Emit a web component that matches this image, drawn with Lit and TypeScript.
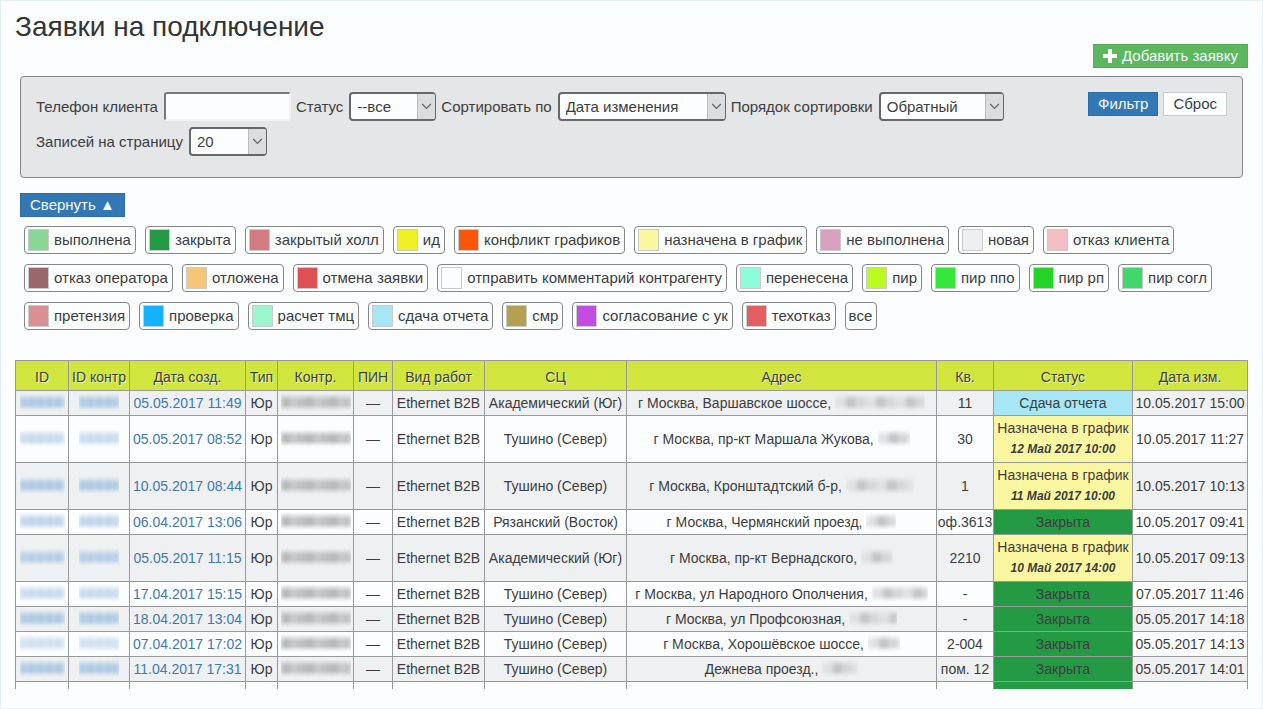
import { LitElement, html, css, nothing } from "lit";
import { customElement, property } from "lit/decorators.js";
import { styleMap } from "lit/directives/style-map.js";

interface Tag { name: string; color?: string }
interface Order {
  idTone: number;
  created: string;
  center: string;
  address: string;
  hidden: number;
  flat: string;
  status: "sent" | "planned" | "closed";
  visit?: string;
  changed: string;
}

const TAGS: Tag[] = [
  { name: "выполнена", color: "#88d795" },
  { name: "закрыта", color: "#259a45" },
  { name: "закрытый холл", color: "#d27c7f" },
  { name: "ид", color: "#f1f026" },
  { name: "конфликт графиков", color: "#fd560a" },
  { name: "назначена в график", color: "#fbf7a0" },
  { name: "не выполнена", color: "#d9a0bf" },
  { name: "новая", color: "#eeeff1" },
  { name: "отказ клиента", color: "#f3bfc3" },
  { name: "отказ оператора", color: "#9b676a" },
  { name: "отложена", color: "#f6c677" },
  { name: "отмена заявки", color: "#df5054" },
  { name: "отправить комментарий контрагенту", color: "#fcfdff" },
  { name: "перенесена", color: "#8dfcd8" },
  { name: "пир", color: "#bcfb20" },
  { name: "пир ппо", color: "#35e73b" },
  { name: "пир рп", color: "#24d528" },
  { name: "пир согл", color: "#42d66c" },
  { name: "претензия", color: "#d98f93" },
  { name: "проверка", color: "#16b1fd" },
  { name: "расчет тмц", color: "#9cf8cc" },
  { name: "сдача отчета", color: "#a6e6f5" },
  { name: "смр", color: "#b59f51" },
  { name: "согласование с ук", color: "#c54ce0" },
  { name: "техотказ", color: "#e45f62" },
  { name: "все" },
];

const ORDERS: Order[] = [
  { idTone: 0.9, created: "05.05.2017 11:49", center: "Академический (Юг)", address: "г Москва, Варшавское шоссе,", hidden: 90, flat: "11", status: "sent", changed: "10.05.2017 15:00" },
  { idTone: 0.6, created: "05.05.2017 08:52", center: "Тушино (Север)", address: "г Москва, пр-кт Маршала Жукова,", hidden: 32, flat: "30", status: "planned", visit: "12 Май 2017 10:00", changed: "10.05.2017 11:27" },
  { idTone: 0.9, created: "10.05.2017 08:44", center: "Тушино (Север)", address: "г Москва, Кронштадтский б-р,", hidden: 68, flat: "1", status: "planned", visit: "11 Май 2017 10:00", changed: "10.05.2017 10:13" },
  { idTone: 0.7, created: "06.04.2017 13:06", center: "Рязанский (Восток)", address: "г Москва, Чермянский проезд,", hidden: 30, flat: "оф.3613", status: "closed", changed: "10.05.2017 09:41" },
  { idTone: 0.8, created: "05.05.2017 11:15", center: "Академический (Юг)", address: "г Москва, пр-кт Вернадского,", hidden: 32, flat: "2210", status: "planned", visit: "10 Май 2017 14:00", changed: "10.05.2017 09:13" },
  { idTone: 0.6, created: "17.04.2017 15:15", center: "Тушино (Север)", address: "г Москва, ул Народного Ополчения,", hidden: 56, flat: "-", status: "closed", changed: "07.05.2017 11:46" },
  { idTone: 0.9, created: "18.04.2017 13:04", center: "Тушино (Север)", address: "г Москва, ул Профсоюзная,", hidden: 48, flat: "-", status: "closed", changed: "05.05.2017 14:18" },
  { idTone: 0.5, created: "07.04.2017 17:02", center: "Тушино (Север)", address: "г Москва, Хорошёвское шоссе,", hidden: 32, flat: "2-004", status: "closed", changed: "05.05.2017 14:13" },
  { idTone: 0.9, created: "11.04.2017 17:31", center: "Тушино (Север)", address: "Дежнева проезд.,", hidden: 36, flat: "пом. 12", status: "closed", changed: "05.05.2017 14:01" },
];

const STATUS_TEXT = { sent: "Сдача отчета", planned: "Назначена в график", closed: "Закрыта" };

const COLUMNS: [string, string][] = [
  ["ID", "c-id"], ["ID контр", "c-ext"], ["Дата созд.", "c-created"], ["Тип", "c-type"],
  ["Контр.", "c-contr"], ["ПИН", "c-pin"], ["Вид работ", "c-work"], ["СЦ", "c-center"],
  ["Адрес", "c-address"], ["Кв.", "c-flat"], ["Статус", "c-status"], ["Дата изм.", "c-changed"],
];

@customElement("select-field")
export class SelectField extends LitElement {
  @property() label = "";
  @property() value = "";
  @property() size = "m";

  static styles = css`
    :host { display: block; }
    .field { display: flex; align-items: center; gap: 6px; }
    label { white-space: nowrap; }
    .box { display: grid; grid-template-columns: 1fr 18px; height: 29px; box-sizing: border-box; border: 2px solid #66676a; border-right-width: 1px; border-radius: 4px; background: #fcfdff; overflow: hidden; }
    .s { width: 78px; }
    .m { width: 87px; }
    .l { width: 125px; }
    .xl { width: 168px; }
    select { grid-area: 1 / 1 / 2 / 3; appearance: none; border: 0; margin: 0; padding: 0 20px 0 6px; background: transparent; color: #3c3d40; font: inherit; outline-offset: -2px; }
    .arrow { grid-area: 1 / 2 / 2 / 3; display: grid; place-items: center; border-left: 1px solid #bbbcbe; background: #dcdddf; pointer-events: none; }
    svg { display: block; }
  `;

  render() {
    return html`
      <div class="field">
        <label for="control">${this.label}</label>
        <div class="box ${this.size}">
          <span class="arrow"><svg width="11" height="7" viewBox="0 0 11 7" fill="none" stroke="#606164" stroke-width="1.2"><path d="M1.2 1 5.5 5.3 9.8 1" /></svg></span>
          <select id="control"><option>${this.value}</option></select>
        </div>
      </div>`;
  }
}

@customElement("app-root")
export class AppRoot extends LitElement {
  static styles = css`
    :host { display: block; color: #3c3d40; font: 15px/20px "Liberation Sans", Arial, sans-serif; }
    .page { box-sizing: border-box; min-height: 100vh; padding: 8px 14px 0; border: 1px solid #e4effc; background: #fcfdff; }
    h1 { margin: 0; color: #333436; font-size: 28px; line-height: 35px; font-weight: 400; }
    .top { display: flex; justify-content: flex-end; }
    button { font: inherit; }
    .btn { box-sizing: border-box; height: 24px; padding: 0 9px; border: 1px solid #2e6da4; background: #3378b5; color: #f4f9fe; line-height: 20px; white-space: nowrap; }
    .add { display: flex; align-items: center; gap: 5px; border-color: #54ad57; background: #5cb75f; }
    .plain { border-color: #ccc; background: #fcfdff; color: #3c3d40; }
    .filters { display: flex; align-items: flex-start; justify-content: space-between; gap: 16px; margin: 8px 5px 0; padding: 15px 15px 21px; border: 1px solid #858688; border-radius: 4px; background: #e5e6e8; }
    .fields { display: flex; flex-wrap: wrap; gap: 6px 5px; }
    .field { display: flex; align-items: center; gap: 6px; white-space: nowrap; }
    .phone { box-sizing: border-box; width: 127px; height: 29px; padding: 0 6px; border: 2px solid; border-color: #77787a #f1f2f4 #f1f2f4 #77787a; border-radius: 3px; background: #fcfdff; color: inherit; font: inherit; }
    .actions { display: flex; gap: 5px; }
    .toggle { margin: 15px 5px 0; }
    .tags { display: flex; flex-wrap: wrap; align-items: flex-start; gap: 10px 9px; margin: 9px 9px 0; }
    .tag { display: flex; align-items: center; gap: 5px; box-sizing: border-box; height: 28px; padding: 0 4px 0 3px; border: 1px solid #858688; border-radius: 4px; background: #fcfdff; color: inherit; white-space: nowrap; }
    .swatch { box-sizing: border-box; width: 21px; height: 22px; border: 1px solid #c9cbcd; }
    .scroll { margin-top: 30px; overflow: hidden; }
    table { width: 100%; border-collapse: collapse; table-layout: fixed; font-size: 14px; }
    th, td { box-sizing: border-box; padding: 2px 0; border: 1px solid #98999b; text-align: center; font-weight: 400; white-space: nowrap; }
    th { height: 30px; padding: 4px 0 2px; background: #d1e53f; text-shadow: 1px 1px 0 #eef5b5; }
    tbody tr:nth-child(odd) { background: #eff0f2; }
    .tail td { height: 7px; padding: 0; border-bottom: 0; }
    tbody .tail { background: #fcfdff; }
    .c-id { width: 53px; } .c-ext { width: 61px; } .c-created { width: 116px; } .c-type { width: 32px; }
    .c-contr { width: 76px; } .c-pin { width: 39px; } .c-work { width: 92px; } .c-center { width: 142px; }
    .c-flat { width: 57px; } .c-status { width: 139px; } .c-changed { width: 115px; }
    a { color: #3e79b2; text-decoration: none; }
    .sent { background: #a6e6f5; }
    .planned { background: #fbf7a0; line-height: 21px; }
    .closed { background: #259a45; }
    .visit { display: block; font-size: 12px; font-weight: 700; font-style: italic; }
    .mask { display: inline-block; height: 18px; vertical-align: top; filter: blur(2px); mask-image: linear-gradient(transparent, #000 40%, #000 65%, transparent); }
    .blue { background: repeating-linear-gradient(90deg, #a3c3e0 0 5px, #b9d1e8 5px 9px); }
    .gray { width: 70px; background: repeating-linear-gradient(90deg, #b8b9bb 0 9px, #c8c9cb 9px 16px, #c0c1c3 16px 24px); }
    .pale { background: repeating-linear-gradient(90deg, #e0e1e3 0 11px, #c4c5c7 11px 20px, #d6d7d9 20px 30px); }
    .w-id { width: 45px; }
    .w-ext { width: 40px; }
  `;

  private row(o: Order) {
    const tone = styleMap({ opacity: String(o.idTone) });
    return html`
      <tr>
        <td><a href="#" aria-label="Заявка"><span class="mask blue w-id" style=${tone}></span></a></td>
        <td><a href="#" aria-label="Заявка контрагента"><span class="mask blue w-ext" style=${tone}></span></a></td>
        <td><a href="#">${o.created}</a></td>
        <td>Юр</td>
        <td><span class="mask gray"></span></td>
        <td>—</td>
        <td>Ethernet B2B</td>
        <td>${o.center}</td>
        <td>${o.address} <span class="mask pale" style=${styleMap({ width: `${o.hidden}px` })}></span></td>
        <td>${o.flat}</td>
        <td class=${o.status}>${STATUS_TEXT[o.status]}${o.visit ? html`<span class="visit">${o.visit}</span>` : nothing}</td>
        <td>${o.changed}</td>
      </tr>`;
  }

  render() {
    return html`
      <main class="page">
        <h1>Заявки на подключение</h1>
        <div class="top">
          <button class="btn add" type="button">
            <svg width="14" height="14" viewBox="0 0 14 14" fill="#fff"><path d="M5 0h4v5h5v4H9v5H5V9H0V5h5z" /></svg>
            Добавить заявку
          </button>
        </div>
        <form class="filters" @submit=${(e: Event) => e.preventDefault()}>
          <div class="fields">
            <div class="field"><label for="phone">Телефон клиента</label><input class="phone" id="phone" type="text" /></div>
            <select-field label="Статус" value="--все" size="m"></select-field>
            <select-field label="Сортировать по" value="Дата изменения" size="xl"></select-field>
            <select-field label="Порядок сортировки" value="Обратный" size="l"></select-field>
            <select-field label="Записей на страницу" value="20" size="s"></select-field>
          </div>
          <div class="actions">
            <button class="btn" type="submit">Фильтр</button>
            <button class="btn plain" type="reset">Сброс</button>
          </div>
        </form>
        <button class="btn toggle" type="button">Свернуть ▲</button>
        <div class="tags">
          ${TAGS.map((t) => html`<button class="tag" type="button">${t.color
            ? html`<span class="swatch" style=${styleMap({ background: t.color })}></span>` : nothing}<span>${t.name}</span></button>`)}
        </div>
        <div class="scroll">
          <table>
            <thead><tr>${COLUMNS.map(([name, cls]) => html`<th class=${cls} scope="col">${name}</th>`)}</tr></thead>
            <tbody>
              ${ORDERS.map((o) => this.row(o))}
              <tr class="tail">${COLUMNS.map(([, cls]) => html`<td class=${cls === "c-status" ? "closed" : ""}></td>`)}</tr>
            </tbody>
          </table>
        </div>
      </main>`;
  }
}
